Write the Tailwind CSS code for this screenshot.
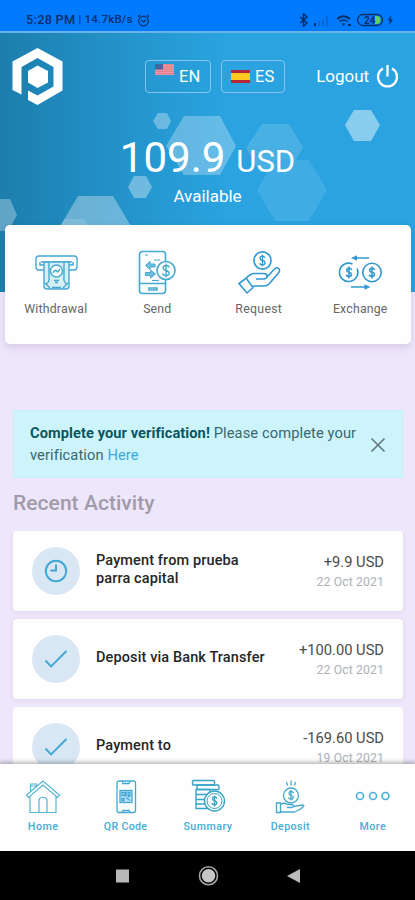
<!DOCTYPE html>
<html lang="en">
<head>
<meta charset="utf-8">
<meta name="viewport" content="width=device-width, initial-scale=1">
<title>Wallet</title>
<script src="https://cdn.jsdelivr.net/npm/@tailwindcss/browser@4"></script>
</head>
<body class="w-[415px] h-[900px] overflow-hidden flex flex-col bg-[#eee6fb] font-['Roboto',sans-serif]">

<!-- Status bar -->
<div class="h-[31px] shrink-0 bg-[#007aff] flex justify-between pt-[12px] pl-[26px] pr-[21px] text-[#0b2f66]">
  <div class="flex h-4 items-center whitespace-nowrap font-medium">
    <span class="text-[12.8px] tracking-[0.25px]">5:28 PM</span>
    <span class="text-[11.5px] ml-[3px] tracking-[0.2px]">| 14.7kB/s</span>
    <svg class="ml-[4px] w-[13px] h-[13px]" viewBox="0 0 13 13" fill="none" stroke="currentColor" stroke-width="1.2"><circle cx="6.5" cy="7" r="4.8"/><path d="M1 2.8 3.2 1M12 2.8 9.800 1M4.300 6l2.200 2 2.200-2"/></svg>
  </div>
  <div class="flex h-4 items-center">
    <svg class="w-[96px] h-[14px]" viewBox="0 0 96 14" fill="none">
      <path d="M2 4l7 6-3.500 3V1L9 4l-7 6" stroke="currentColor" stroke-width="1.500"/>
      <path d="M16 10h2v3h-2z" fill="currentColor"/><path d="M20 8h2v5h-2zM24 5.500h2V13h-2zM28 3h2v10h-2z" fill="#0f66d0"/>
      <path d="M39 6q6.500-5.500 13 0M41.500 8.500q4-3 8 0" stroke="currentColor" stroke-width="1.700"/><path d="M43.500 10.500l2 2.500 2-2.500zM50 11h3v2h-3z" fill="currentColor"/>
      <path d="M77 3h1.500a4 4 0 0 1 0 8H77z" fill="#63d05c"/>
      <rect x="59.500" y="1.500" width="25" height="11" rx="5.500" stroke="currentColor" stroke-width="1.300"/>
      <text x="66" y="10.800" font-size="10" font-weight="700" fill="currentColor" font-family="Roboto, sans-serif">24</text>
      <path d="M93.500 2l-4 5.500h2.500l-1 5 4-6h-2.500z" fill="currentColor"/>
    </svg>
  </div>
</div>

<!-- Header -->
<header class="relative h-[261px] shrink-0 bg-linear-to-r from-[#1c7ead] via-[#2597d0] via-35% to-[#2aa3e0] to-55% border-t-2 border-[#68b3e8] text-white">
  <svg class="absolute left-0 top-[-2px] w-[415px] h-[261px]" viewBox="0 31 415 261">
    <g fill="#fff">
      <path opacity=".28" d="M184 116h36l16 30-16 29h-36l-18-29z"/>
      <path opacity=".32" d="M158 113h9l4 8-4 8h-9l-5-8z"/>
      <path opacity=".34" d="M134 176h12l6 11-6 11h-12l-6-11z"/>
      <path opacity=".3" d="M0 199h10l7 16-9 16H0z"/>
      <path opacity=".33" d="M78 196h35l19 32-19 32H78l-19-32z"/>
      <path opacity=".14" d="M61 225l3-6h20l4 6z"/>
      <path opacity=".15" d="M262 124h27l14 23-7 13h-21l-7 12h-8l-14-24z"/>
      <path opacity=".1" d="M275 160h34l18 30-18 31h-34l-18-31z"/>
      <path opacity=".45" d="M354 110h17l9 15-9 16h-17l-9-16z"/>
    </g>
  </svg>
  <div class="relative flex items-start pl-[12px] pr-[16px] pt-[14px]">
    <svg class="mt-[1px] w-[51px] h-[57px]" viewBox="0 0 51 57" fill="#fff"><path d="M25.500 0 50.500 13.500V42.500L25.500 57 16 52V42.500L25.500 47.500 41.500 38.500V19L25.500 10 9.500 19V46.500L.5 42V13.500z"/><path d="M25.500 17.500 36 23v11.500L25.500 40 16 34.500V23z"/></svg>
    <div class="mt-[13px] ml-[82px] flex gap-[10px] text-[17px]">
      <a class="w-[66px] h-[33px] border-[1.5px] border-[#84c7ee] rounded-[4px] flex items-center pl-[9px]">
        <svg class="w-[19px] h-[11px] mb-[14px]" viewBox="0 0 19 11"><rect width="19" height="11" fill="#e99aa8"/><path d="M0 .8h19M0 3h19M0 5.200h19M0 7.400h19M0 9.600h19" stroke="#e5728a" stroke-width=".9"/><rect width="8" height="5.500" fill="#4d62a3"/></svg>
        <span class="ml-[5px] mt-[2px] text-[16.5px]">EN</span>
      </a>
      <a class="w-[64px] h-[33px] border-[1.5px] border-[#84c7ee] rounded-[4px] flex items-center pl-[9px]">
        <svg class="w-[19px] h-[13px]" viewBox="0 0 19 13"><rect width="19" height="13" fill="#b6243a"/><rect y="3" width="19" height="7" fill="#ffc720"/></svg>
        <span class="ml-[5px] mt-[2px] text-[16.5px]">ES</span>
      </a>
    </div>
    <a class="mt-[17px] ml-auto flex items-center gap-[7px] text-[17px] leading-6">
      <span class="tracking-[-0.05px]">Logout</span>
      <svg class="w-[23px] h-[23px]" viewBox="0 0 23 23" fill="none" stroke="#fff" stroke-width="2.300"><path d="M7 3.500a9.500 9.500 0 1 0 9 0M11.500 0v11.500"/></svg>
    </a>
  </div>
  <div class="relative mt-[28px] flex flex-col items-center whitespace-nowrap">
    <div class="flex items-baseline leading-[50px] h-[50px] gap-[11px]"><span class="text-[42px]">109.9</span><span class="text-[31px]">USD</span></div>
    <div class="mt-[2px] text-[17px] leading-[22px]">Available</div>
  </div>
</header>

<!-- Quick actions -->
<section class="relative -mt-[67px] ml-[5px] w-[406px] h-[119px] shrink-0 rounded-[5px] bg-[#fefefe] shadow-[0_3px_8px_rgba(80,60,110,0.16)] grid grid-cols-4 pt-[24px] text-[12.3px] text-[#666]">
  <div class="flex flex-col items-center">
    <svg class="w-[44px] h-[46px]" viewBox="0 0 44 46" fill="none" stroke="#43a9cf" stroke-width="1.400">
      <path d="M10 21H5q-3 0-3-3V10q0-3 3-3h35q3 0 3 3v8q0 3-3 3h-5"/><path d="M7 13h31M6 13v3h4M39 13v3h-4"/>
      <path fill="#d6eff7" d="M10 13h25v24q0 3-3 3H13q-3 0-3-3z"/><path d="M15 14v14M30 14v14M11 34l5 5M34 34l-5 5M18 38.500h9M15 28q1 5-3 7M30 28q-1 5 3 7"/><circle cx="22.500" cy="22" r="6" fill="#fff"/><path d="M19 24q2-4 3.500-2t3.500-2" stroke-width="1.500"/><path d="M20 31.500h5M21 33.500h3" stroke-width="1.500"/>
    </svg><span class="mt-[5px] tracking-[0.2px]">Withdrawal</span>
  </div>
  <div class="flex flex-col items-center">
    <svg class="w-[44px] h-[46px]" viewBox="0 0 44 46" fill="none" stroke="#43a9cf" stroke-width="1.600">
      <rect x="4.500" y="2.500" width="26" height="42" rx="3"/><path d="M4.500 34.500h26M14 39h8v2h-8z"/><path d="M19 11h6M17 31.500h7M10 6h3" stroke-width="1.200"/><path d="M10.500 16.500 15 12.500v2.500h5v3h-5v2.500zM20.500 25l-5-4v2.500h-5v3h5V29z" fill="#6fc0de" stroke-width="1"/><circle cx="31" cy="21.500" r="9" fill="#fff"/><path d="M34.500 18.500q-1-2-3.500-2t-3 2.300q0 2 3 2.700t3.200 2.700q0 2.300-3.200 2.300t-3.500-2.200M31 14.500v14" stroke-width="1.300"/>
    </svg><span class="mt-[5px] tracking-[0.15px]">Send</span>
  </div>
  <div class="flex flex-col items-center">
    <svg class="w-[44px] h-[46px]" viewBox="0 0 44 46" fill="none" stroke="#3199cf" stroke-width="1.600" stroke-linejoin="round">
      <circle cx="25.500" cy="11.500" r="8.600"/><path d="M28 8.800q-.8-1.600-2.600-1.600-2.400 0-2.400 2 0 1.700 2.500 2.200t2.600 2.400q0 2.100-2.600 2.100t-2.700-1.800M25.500 5.500v12" stroke-width="1.300"/>
      <path d="M7.500 30.500 2 34.500l8 9.500 6-5.500-7-9.500zM9 29.500q4-5.500 10-5h7q4 0 4 2.500 0 3-4 3h-7M30 28l7.500-8q2.500-2.500 4.500 0 1.500 2-1 4.500L32 35q-2 2-5 2h-8q-2 0-4 .500"/>
    </svg><span class="mt-[5px] tracking-[0.3px]">Request</span>
  </div>
  <div class="flex flex-col items-center">
    <svg class="w-[44px] h-[46px]" viewBox="0 0 44 46" fill="none" stroke="#3199cf" stroke-width="1.600">
      <path d="M31 9H16M13 38h16"/><path d="M19 6.200 13 9l6 2.800zM26.500 35.200l6 2.800-6 2.800z" fill="#3199cf" stroke="none"/>
      <path d="M14.500 15a9.200 9.200 0 1 0 4.500 4.500M19.600 26a9.200 9.200 0 0 0 .4-4"/><circle cx="34" cy="23.500" r="9.200"/>
      <path id="coin" d="M13.700 21q-.6-1.800-2.700-1.800-2.300 0-2.300 2 0 1.600 2.300 2.100t2.500 2.200q0 2-2.500 2t-2.700-1.800M11 17.500v12" stroke-width="1.600"/><use href="#coin" x="23"/>
    </svg><span class="mt-[5px] tracking-[0.2px]">Exchange</span>
  </div>
</section>

<!-- Verification notice -->
<section class="mt-[66px] ml-[13px] mr-[12px] h-[68px] shrink-0 bg-[#cdf4fb] border border-[#c5f0f8] flex pl-[16px] pt-[11px] text-[14.7px] leading-[22px] text-[#39676e] whitespace-nowrap">
  <p class="w-[334px] tracking-[0.09px]"><b class="text-[#0a5661] font-bold text-[14.6px]">Complete your verification!</b> Please complete your<br>verification <a class="text-[#3da9df]">Here</a></p>
  <svg class="mt-[15px] ml-[6px] w-[16px] h-[16px]" viewBox="0 0 16 16" stroke="#60787d" stroke-width="1.600"><path d="M1.500 1.500l13 13M14.500 1.500l-13 13"/></svg>
</section>

<h2 class="mt-[12px] ml-[13px] h-[26px] shrink-0 text-[21px] leading-[26px] font-medium text-[#a09ba9] tracking-[0.05px]">Recent Activity</h2>

<!-- Transactions -->
<main class="mt-[15px] h-[233px] shrink-0 overflow-hidden flex flex-col gap-[8px] pl-[13px] pr-[12px] text-[#262626]">
  <article class="h-[80px] shrink-0 rounded-[4px] bg-[#fefefe] shadow-[0_1px_4px_rgba(80,60,110,0.10)] flex items-center pl-[19px] pr-[19px]">
    <div class="size-[48px] rounded-full bg-[#d8e7f3] grid place-items-center"><svg class="size-[24px]" viewBox="0 0 24 24" fill="none" stroke="#3fa7d5" stroke-width="1.900"><circle cx="12" cy="12" r="10.200"/><path d="M12 5.500v6H6.500"/></svg></div>
    <div class="ml-[16px] mb-[3px] text-[14.5px] leading-[18px] font-medium whitespace-nowrap tracking-[0.12px]">Payment from prueba<br>parra capital</div>
    <div class="ml-auto mt-[2px] text-right whitespace-nowrap"><div class="text-[14.7px] leading-[20px] text-[#4b4b4b]">+9.9 USD</div><div class="text-[12.2px] leading-[20px] text-[#adb2b7] tracking-[0.15px]">22 Oct 2021</div></div>
  </article>
  <article class="h-[80px] shrink-0 rounded-[4px] bg-[#fefefe] shadow-[0_1px_4px_rgba(80,60,110,0.10)] flex items-center pl-[19px] pr-[19px]">
    <div class="size-[48px] rounded-full bg-[#d8e7f3] grid place-items-center"><svg class="size-[24px]" viewBox="0 0 24 24" fill="none" stroke="#3fa7d5" stroke-width="1.900"><path d="M1.500 13.500l5.500 6L22.500 4"/></svg></div>
    <div class="ml-[16px] mb-[3px] text-[14.5px] leading-[18px] font-medium whitespace-nowrap tracking-[0.12px]">Deposit via Bank Transfer</div>
    <div class="ml-auto mt-[2px] text-right whitespace-nowrap"><div class="text-[14.7px] leading-[20px] text-[#4b4b4b]">+100.00 USD</div><div class="text-[12.2px] leading-[20px] text-[#adb2b7] tracking-[0.15px]">22 Oct 2021</div></div>
  </article>
  <article class="h-[80px] shrink-0 rounded-[4px] bg-[#fefefe] flex items-center pl-[19px] pr-[19px]">
    <div class="size-[48px] rounded-full bg-[#d8e7f3] grid place-items-center"><svg class="size-[24px]" viewBox="0 0 24 24" fill="none" stroke="#3fa7d5" stroke-width="1.900"><path d="M1.500 13.500l5.500 6L22.500 4"/></svg></div>
    <div class="ml-[16px] mb-[3px] text-[14.5px] leading-[18px] font-medium whitespace-nowrap tracking-[0.12px]">Payment to</div>
    <div class="ml-auto mt-[2px] text-right whitespace-nowrap"><div class="text-[14.7px] leading-[20px] text-[#4b4b4b]">-169.60 USD</div><div class="text-[12.2px] leading-[20px] text-[#adb2b7] tracking-[0.15px]">19 Oct 2021</div></div>
  </article>
</main>

<!-- Tab bar -->
<nav class="relative h-[87px] shrink-0 bg-[#fefefe] shadow-[0_-1px_4px_1px_rgba(0,0,0,0.28)] grid grid-cols-5 pl-[2px] pr-[1px] pt-[15px] text-[10.7px] text-[#46aed3]">
  <a class="flex flex-col items-center">
    <svg class="w-[36px] h-[36px]" viewBox="0 0 36 36" fill="none" stroke="#55b3d4" stroke-width="1.200"><path d="M5 17v16.500h26V17M1.500 16 18 2l16.500 14-2 2.500L18 6 3.500 18.500zM5.500 12.500V5h6v2.500M5.500 7h6M14 33.500V21.500q0-3 3-3h2q3 0 3 3v12"/></svg>
    <span class="mt-[4px] font-medium tracking-[0.5px]">Home</span>
  </a>
  <a class="flex flex-col items-center">
    <svg class="w-[36px] h-[36px]" viewBox="0 0 36 36" fill="none" stroke="#43a9d3" stroke-width="1.300"><rect x="9" y="2" width="18.500" height="31.500" rx="2"/><path d="M14 2l1 2.500h6l1-2.500M14 33.500l1-2h6l1 2"/><rect x="12" y="11.500" width="12" height="12" fill="#bfe1f3"/><path d="M14 13.500h3v3h-3zM20 13.500h2v3h-2zM14 19.500h2v2h-2zM18 18.500l4 3M20 17.500h2M18 12.500v5"/></svg>
    <span class="mt-[4px] font-medium tracking-[0.3px]">QR Code</span>
  </a>
  <a class="flex flex-col items-center">
    <svg class="w-[36px] h-[36px]" viewBox="0 0 36 36" fill="none" stroke="#36a3c9" stroke-width="1.400"><rect x="2.500" y="1.500" width="22" height="4.500" rx="1"/><rect x="7" y="6" width="22" height="4.500" rx="1"/><path d="M6 10.500h14v5H6zM6 15.500h12v5H6zM6 20.500h11V25H6zM6 25h12v4.500H6z"/><circle cx="24.500" cy="22" r="10" fill="#fff"/><circle cx="24.500" cy="22" r="7.500" stroke-width="1"/><path d="M27 19.500q-.6-1.500-2.500-1.500t-2 1.800q0 1.500 2 2t2.300 2q0 1.900-2.300 1.900t-2.500-1.700M24.500 16.500v11"/></svg>
    <span class="mt-[4px] font-medium tracking-[0.45px]">Summary</span>
  </a>
  <a class="flex flex-col items-center">
    <svg class="w-[36px] h-[36px]" viewBox="0 0 36 36" fill="none" stroke="#45a9cd" stroke-width="1.300"><circle cx="19" cy="16.500" r="7.500"/><path d="M21.500 14q-.6-1.500-2.500-1.500t-2 1.800q0 1.500 2 2t2.300 2q0 1.900-2.300 1.900t-2.500-1.700M19 11v10.500M19 1.500v5M14.500 3l1 3.500M23.500 3l-1 3.500"/><path d="M4.500 24h4v9.500h-4zM8.500 25.500q4-2.500 7 0h4q2 0 2 1.500t-2 1.500H15M21.500 27.500l9-1.500q2 0 1 1.500-4 4-9 5.500h-14"/></svg>
    <span class="mt-[4px] font-medium tracking-[0.4px]">Deposit</span>
  </a>
  <a class="flex flex-col items-center">
    <svg class="w-[36px] h-[36px]" viewBox="0 0 36 36" fill="none" stroke="#4db0d8" stroke-width="1.600"><circle cx="5" cy="17" r="3.500"/><circle cx="18" cy="17" r="3.500"/><circle cx="30.500" cy="17" r="3.500"/></svg>
    <span class="mt-[4px] font-medium tracking-[0.5px]">More</span>
  </a>
</nav>

<!-- System navigation -->
<div class="relative h-[49px] shrink-0 bg-black flex items-center justify-center">
  <svg class="w-[190px] h-[24px]" viewBox="0 0 190 24"><rect x="3" y="5.500" width="13" height="13" fill="#b9b9b9"/><circle cx="95.500" cy="11.800" r="9" fill="none" stroke="#a5a5a5" stroke-width="1.600"/><circle cx="95.500" cy="11.800" r="6.800" fill="#c6c6c6"/><path d="M174 12 187 5v14z" fill="#bcbcbc"/></svg>
</div>
</body>
</html>
